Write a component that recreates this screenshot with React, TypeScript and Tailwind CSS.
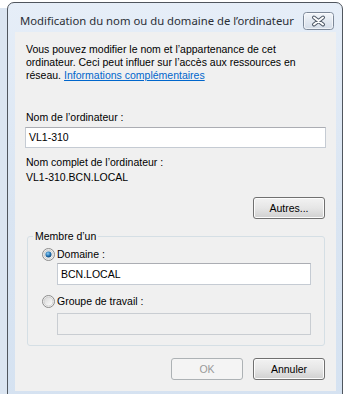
import React from "react";

function CloseGlyph() {
  return (
    <svg width="31" height="18" viewBox="0 0 31 18">
      <defs>
        <linearGradient id="cb" x1="0" y1="0" x2="0" y2="1">
          <stop offset="0" stopColor="#f4f7fb" />
          <stop offset="0.5" stopColor="#e3e9f1" />
          <stop offset="1" stopColor="#d3dce8" />
        </linearGradient>
      </defs>
      <rect x="0.5" y="0.5" width="30" height="17" rx="3" fill="url(#cb)" stroke="#7d8898" />
      <rect x="1.5" y="1.5" width="28" height="15" rx="2" fill="none" stroke="#ffffff" strokeOpacity="0.6" />
      <path d="M11 5.5 L20 12.5 M20 5.5 L11 12.5" stroke="#4e5866" strokeWidth="4" strokeLinecap="round" />
      <path d="M11 5.5 L20 12.5 M20 5.5 L11 12.5" stroke="#ffffff" strokeWidth="2" strokeLinecap="round" />
    </svg>
  );
}

function Radio({ checked }: { checked?: boolean }) {
  return (
    <svg width="13" height="13" viewBox="0 0 13 13" className="shrink-0">
      <defs>
        <linearGradient id="rf" x1="0" y1="0" x2="1" y2="1">
          <stop offset="0" stopColor="#d6d6d6" />
          <stop offset="1" stopColor="#ffffff" />
        </linearGradient>
        <radialGradient id="rd" cx="0.4" cy="0.35" r="0.7">
          <stop offset="0" stopColor="#8fd0f7" />
          <stop offset="0.6" stopColor="#1f6fb0" />
          <stop offset="1" stopColor="#0f3f6c" />
        </radialGradient>
      </defs>
      <circle cx="6.5" cy="6.5" r="6" fill="#f4f4f4" stroke="#8a8a8a" />
      <circle cx="6.5" cy="6.5" r="4.5" fill="url(#rf)" stroke="#c9c9c9" strokeWidth="0.8" />
      {checked && <circle cx="6.5" cy="6.5" r="3" fill="url(#rd)" />}
    </svg>
  );
}

function Button({ label, disabled }: { label: string; disabled?: boolean }) {
  return (
    <div
      className={
        disabled
          ? "w-[72px] h-[22px] rounded-[3px] border border-[#adb2b5] bg-[#f4f4f4] flex items-center justify-center text-[#9a9a9a]"
          : "w-[72px] h-[22px] rounded-[3px] border border-[#707070] bg-gradient-to-b from-[#f2f2f2] via-[#e6e6e6] to-[#d0d0d0] shadow-[inset_0_0_0_1px_#fcfcfc] flex items-center justify-center text-black"
      }
    >
      {label}
    </div>
  );
}

export default function App() {
  return (
    <div className="w-[346px] h-[394px] overflow-hidden bg-white flex font-['Liberation_Sans',Arial,sans-serif] text-[10.5px] leading-[13px]">
      <div className="w-[7px] mt-[8px] bg-[#dbe5f1] shrink-0" />
      <div className="w-[336px] h-[410px] mt-[2px] shrink-0 border border-[#50565e] rounded-t-[7px] bg-gradient-to-b from-[#e6eef8] via-[#dae5f2] to-[#d5e2f1] flex flex-col">
        <div className="h-[29px] flex items-start justify-between pl-[12px] pr-[8px]">
          <div className="mt-[10px] whitespace-nowrap font-['Noto_Sans',sans-serif] text-[11.3px] leading-[16px] text-[#2b2f36]">
            Modification du nom ou du domaine de l’ordinateur
          </div>
          <div className="mt-[9px]">
            <CloseGlyph />
          </div>
        </div>
        <div className="ml-[7px] mr-[6px] h-[359px] bg-[#f0f0f0] flex flex-col px-[10px] pt-[11px] text-black">
          <div className="pl-[1px] flex flex-col">
            <span>Vous pouvez modifier le nom et l’appartenance de cet</span>
            <span>ordinateur. Ceci peut influer sur l’accès aux ressources en</span>
            <div className="flex gap-[3px]">
              <span>réseau.</span>
              <span className="text-[#0066cc] underline">Informations complémentaires</span>
            </div>
          </div>
          <div className="mt-[29px] pl-[1px]">Nom de l’ordinateur :</div>
          <div className="mt-[3px] h-[21px] bg-white border border-[#c5cbd3] border-t-[#abadb3] flex items-center pl-[3px]">
            VL1-310
          </div>
          <div className="mt-[8px] pl-[1px]">Nom complet de l’ordinateur :</div>
          <div className="mt-[2px] pl-[1px]">VL1-310.BCN.LOCAL</div>
          <div className="mt-[13px] self-end mr-[1px]">
            <Button label="Autres..." />
          </div>
          <fieldset className="mt-[10px] ml-[2px] mr-[1px] border border-[#d5dfe5] rounded-[3px] pb-[10px]">
            <legend className="ml-[5px] px-[2px] h-[14px] leading-[14px]">Membre d’un</legend>
            <div className="mt-[5px] pl-[14px] flex items-center gap-[2px]">
              <Radio checked />
              <span>Domaine :</span>
            </div>
            <div className="mt-[2px] ml-[29px] w-[254px] h-[22px] bg-white border border-[#c5cbd3] border-t-[#abadb3] flex items-center pl-[3px]">
              BCN.LOCAL
            </div>
            <div className="mt-[10px] pl-[14px] flex items-center gap-[2px]">
              <Radio />
              <span>Groupe de travail :</span>
            </div>
            <div className="mt-[5px] ml-[29px] w-[254px] h-[22px] bg-[#f0f0f0] border border-[#c9cdd2]" />
          </fieldset>
          <div className="mt-[12px] self-end mr-[1px] flex gap-[10px]">
            <Button label="OK" disabled />
            <Button label="Annuler" />
          </div>
        </div>
      </div>
      <div className="flex-1 bg-white" />
    </div>
  );
}
